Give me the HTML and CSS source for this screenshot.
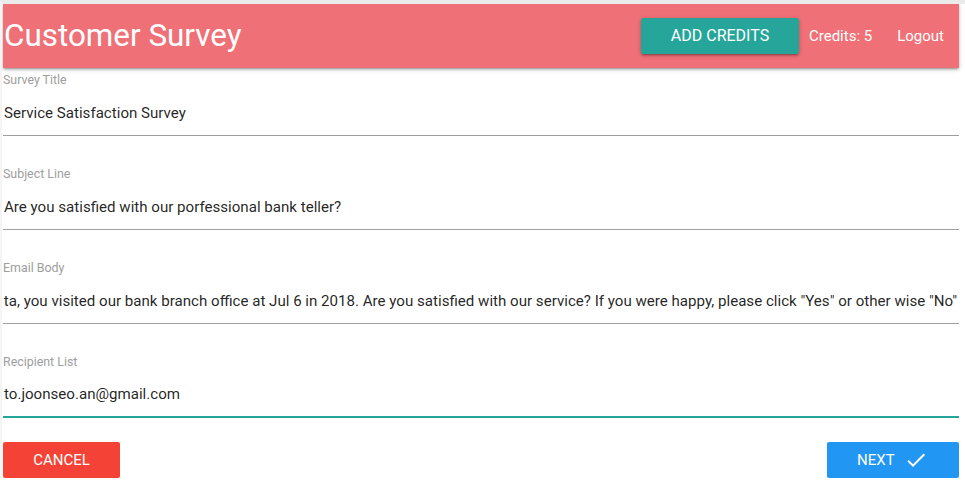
FILE: index.html
```html
<!DOCTYPE html>
<html>
<head>
<meta charset="utf-8">
<link rel="stylesheet" href="styles.css">
</head>
<body>
<div class="page">
  <nav class="nav">
    <div class="brand">Customer Survey</div>
    <div class="nav-right">
      <button class="btn btn-teal">ADD CREDITS</button>
      <span class="nav-item credits">Credits: 5</span>
      <span class="nav-item logout">Logout</span>
    </div>
  </nav>
  <form class="form">
    <div class="field">
      <label class="label">Survey Title</label>
      <div class="input"><span>Service Satisfaction Survey</span></div>
    </div>
    <div class="field">
      <label class="label">Subject Line</label>
      <div class="input"><span>Are you satisfied with our porfessional bank teller?</span></div>
    </div>
    <div class="field">
      <label class="label">Email Body</label>
      <div class="input input-end"><span>ta, you visited our bank branch office at Jul 6 in 2018. Are you satisfied with our service? If you were happy, please click "Yes" or other wise "No"</span></div>
    </div>
    <div class="field">
      <label class="label">Recipient List</label>
      <div class="input input-focus"><span>to.joonseo.an@gmail.com</span></div>
    </div>
    <div class="actions">
      <button type="button" class="btn btn-red">CANCEL</button>
      <button type="button" class="btn btn-blue">NEXT
        <svg class="check" viewBox="0 0 24 24" width="24" height="24"><path d="M9 16.17L4.83 12l-1.42 1.41L9 19 21 7l-1.41-1.41z" fill="#fff"/></svg>
      </button>
    </div>
  </form>
</div>
</body>
</html>
```
FILE: styles.css
```css
html, body {
  margin: 0;
  padding: 0;
  background: #fff;
}
body {
  font-family: Roboto, "Liberation Sans", sans-serif;
  border-top: 4px solid #ebebeb;
  border-left: 2px solid #f4f4f4;
  padding: 0 6px 0 1px;
  color: rgba(0, 0, 0, 0.87);
}
.page {
  width: 956px;
}
.nav {
  height: 64px;
  background: #f07077;
  display: flex;
  align-items: center;
  justify-content: space-between;
  box-shadow: 0 2px 2px 0 rgba(0,0,0,0.14), 0 3px 1px -2px rgba(0,0,0,0.12), 0 1px 5px 0 rgba(0,0,0,0.2);
  color: #fff;
}
.brand {
  font-size: 31.4px;
  line-height: 64px;
  padding-left: 1px;
}
.nav-right {
  display: flex;
  align-items: center;
  padding-right: 15px;
}
.nav-item {
  font-size: 15px;
  line-height: 64px;
}
.credits {
  margin-left: 10px;
}
.logout {
  margin-left: 25px;
}
.btn {
  border: none;
  border-radius: 2px;
  color: #fff;
  font-family: Roboto, "Liberation Sans", sans-serif;
  font-size: 15px;
  height: 36px;
  line-height: 36px;
  padding: 0 30px;
  cursor: pointer;
  box-shadow: 0 2px 2px 0 rgba(0,0,0,0.14), 0 3px 1px -2px rgba(0,0,0,0.12), 0 1px 5px 0 rgba(0,0,0,0.2);
  display: inline-flex;
  align-items: center;
}
.btn-teal {
  background: #26a69a;
  width: 158px;
  justify-content: center;
  padding: 0;
  font-size: 16px;
}
.btn-red {
  background: #f44336;
  width: 117px;
  justify-content: center;
  padding: 0;
  box-shadow: none;
}
.btn-blue {
  background: #2196f3;
  width: 132px;
  padding: 0 0 0 30px;
  box-shadow: none;
}
.check {
  margin-left: 9px;
}
.form {
  padding-top: 5px;
}
.field {
  margin-bottom: 31px;
}
.label {
  display: block;
  font-size: 12.4px;
  line-height: 14px;
  color: #9e9e9e;
}
.input {
  margin-top: 3px;
  height: 45px;
  border-bottom: 1px solid #9e9e9e;
  display: flex;
  align-items: center;
  font-size: 15.1px;
  white-space: nowrap;
  overflow: hidden;
  padding-left: 1px;
}
.input-end {
  justify-content: flex-end;
  padding-right: 2px;
}
.input-focus {
  height: 44px;
  border-bottom-color: #26a69a;
  box-shadow: 0 1px 0 0 #26a69a;
}
.actions {
  display: flex;
  justify-content: space-between;
  margin-top: -6px;
}
```
